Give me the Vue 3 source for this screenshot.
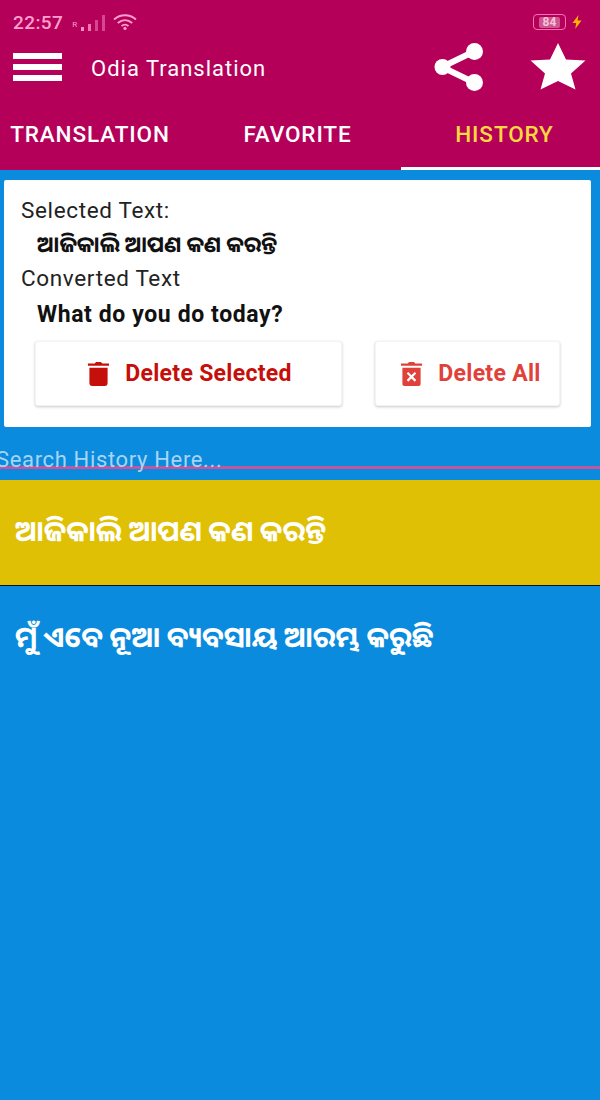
<template>
	<div class="screen">
		<header class="appbar">
			<div class="status">
				<span class="clock">22:57</span>
				<span class="roam">R</span>
				<span class="signal">
					<i v-for="(bar, idx) in signalBars" :key="idx" :style="{ height: bar.h + 'px', background: bar.c }"></i>
				</span>
				<svg class="wifi" viewBox="0 0 24 16" width="24" height="16">
					<path d="M1 5.5C7.5-.2 16.500-.2 23 5.500" />
					<path d="M4.800 9C9.200 5.300 14.800 5.300 19.200 9" />
					<path d="M8.500 12C10.700 10.300 13.300 10.300 15.500 12" />
					<circle cx="12" cy="14.400" r="1.600" />
				</svg>
				<span class="status-right">
					<span class="battery"><b>84</b></span>
					<svg class="bolt" viewBox="0 0 10 14" width="10" height="14">
						<path d="M6.500 0 0.500 8H4.200L3.200 14 9.500 5.600H5.600Z" />
					</svg>
				</span>
			</div>

			<div class="toolbar">
				<div class="menu"><i></i><i></i><i></i></div>
				<h1>Odia Translation</h1>
				<svg class="share" viewBox="0 0 50 48" width="50" height="48">
					<path d="M8 24 41 8M8 24 41 40" />
					<circle cx="8.500" cy="24" r="8" />
					<circle cx="40.500" cy="8.500" r="8.500" />
					<circle cx="40.500" cy="39.500" r="8.500" />
				</svg>
				<svg class="star" viewBox="0 0 56 48" width="56" height="48">
					<path d="M28 0 36 16.500 55.500 17.500 41 30.500 45.500 46.500 28 38 10.500 46.500 15 30.500 0.500 17.500 20 16.500Z" />
				</svg>
			</div>

			<nav class="tabs">
				<a v-for="tab in tabs" :key="tab" :class="{ active: tab === 'HISTORY' }">{{ tab }}</a>
			</nav>
		</header>

		<section class="card">
			<p class="label">Selected Text:</p>
			<p class="value odia">ଆଜିକାଲି ଆପଣ କଣ କରନ୍ତି</p>
			<p class="label">Converted Text</p>
			<p class="value english">What do you do today?</p>
			<div class="actions">
				<button class="btn selected">
					<svg viewBox="0 0 24 26" width="23" height="25">
						<path d="M8 2.500 9.500 1H14.500L16 2.500H23V5H1V2.500ZM2.500 7H21.500V23A3 3 0 0 1 18.500 26H5.500A3 3 0 0 1 2.500 23Z" />
					</svg>
					Delete Selected
				</button>
				<button class="btn all">
					<svg viewBox="0 0 24 26" width="23" height="25">
						<path fill-rule="evenodd" d="M8 2.500 9.500 1H14.500L16 2.500H23V5H1V2.500ZM2.500 7H21.500V24A2 2 0 0 1 19.500 26H4.500A2 2 0 0 1 2.500 24ZM8.600 11.500 7 13.100 10.400 16.500 7 19.900 8.600 21.500 12 18.100 15.400 21.500 17 19.900 13.600 16.500 17 13.100 15.400 11.500 12 14.900Z" />
					</svg>
					Delete All
				</button>
			</div>
		</section>

		<div class="search">
			<span>Search History Here...</span>
		</div>

		<ul class="history">
			<li v-for="(row, idx) in history" :key="idx" :class="{ picked: idx === 0 }">{{ row }}</li>
		</ul>
	</div>
</template>

<script setup>
const signalBars = [
	{ h: 4, c: "#ff8cc4" },
	{ h: 7, c: "#f078b0" },
	{ h: 11, c: "#d3488f" },
	{ h: 16, c: "#d3488f" },
];
const tabs = ["TRANSLATION", "FAVORITE", "HISTORY"];
const history = ["ଆଜିକାଲି ଆପଣ କଣ କରନ୍ତି", "ମୁଁ ଏବେ ନୂଆ ବ୍ୟବସାୟ ଆରମ୍ଭ କରୁଛି"];
</script>

<style>
html,
body {
	margin: 0;
	background: #0a8bdd;
}
</style>

<style scoped>
.screen {
	width: 600px;
	height: 1100px;
	overflow: hidden;
	background: #0a8bdd;
	font-family: Roboto, "Noto Sans", sans-serif;
}

.appbar {
	height: 170px;
	background: #b5005a;
}

.status {
	display: flex;
	align-items: center;
	height: 44px;
	padding: 0 18px 0 13px;
	box-sizing: border-box;
	color: #ff9fcf;
}
.clock {
	font-size: 19px;
	font-weight: 500;
	letter-spacing: 0.400px;
}
.roam {
	font-size: 8px;
	margin: 5px 4px 0 9px;
}
.signal {
	display: flex;
	align-items: flex-end;
	gap: 4px;
	height: 16px;
	margin-top: 2px;
}
.signal i {
	width: 3px;
}
.wifi {
	margin-left: 8px;
	fill: #ff9fcf;
}
.wifi path {
	fill: none;
	stroke: #ff9fcf;
	stroke-width: 1.800;
}
.status-right {
	display: flex;
	align-items: center;
	gap: 6px;
	margin-left: auto;
}
.battery {
	display: flex;
	align-items: center;
	justify-content: center;
	width: 33px;
	height: 16px;
	border: 1.500px solid #ff6fb4;
	border-radius: 4px;
	box-sizing: border-box;
}
.battery b {
	font-size: 12px;
	line-height: 11px;
	padding: 0 4px;
	color: #f4c2dc;
	background: #d0568f;
	border-radius: 2px;
}
.bolt {
	fill: #ffb300;
}

.toolbar {
	display: flex;
	align-items: center;
	height: 45px;
	padding: 0 14px 0 13px;
}
.menu {
	display: flex;
	flex-direction: column;
	gap: 5px;
	width: 49px;
}
.menu i {
	height: 6px;
	background: #fff;
}
h1 {
	flex: 1;
	margin: 3px 0 0 29px;
	font-size: 22px;
	font-weight: 400;
	letter-spacing: 1px;
	color: #fff;
}
.share {
	margin-right: 46px;
	fill: #fff;
	stroke: #fff;
}
.share path {
	stroke-width: 6px;
	fill: none;
}
.share circle {
	stroke: none;
}
.star {
	fill: #fff;
}

.tabs {
	display: grid;
	grid-template-columns: 180px 1fr 199px;
	height: 81px;
	box-sizing: border-box;
	padding-top: 16px;
}
.tabs a {
	font-size: 22.500px;
	font-weight: 500;
	letter-spacing: 0.900px;
	line-height: 58px;
	height: 65px;
	box-sizing: border-box;
	text-align: center;
	color: #fff;
}
.tabs a:nth-child(2) {
	padding-left: 14px;
}
.tabs a.active {
	padding-left: 8px;
	color: #ffd740;
	border-bottom: 3px solid #fff;
}

.card {
	margin: 10px 9px 0 4px;
	height: 247px;
	padding: 18px 18px 0;
	box-sizing: border-box;
	background: #fff;
	border-radius: 2px;
	color: #111;
}
.label {
	margin: 0;
	font-size: 22.500px;
	letter-spacing: 0.650px;
	line-height: 25px;
	margin-left: -1px;
	color: #222;
}
.value {
	margin: 8px 0 11px 15px;
	font-size: 23px;
	font-weight: 700;
	letter-spacing: 0.600px;
	line-height: 24px;
}
.odia {
	font-family: "Noto Sans Oriya", "Lohit Odia", Roboto, sans-serif;
	font-size: 22px;
	letter-spacing: 0;
}
.english {
	margin: 12px 0 0 15px;
}
.actions {
	display: flex;
	justify-content: space-between;
	margin: 14px 13px 0;
}
.btn {
	display: flex;
	align-items: center;
	justify-content: center;
	gap: 15px;
	height: 65px;
	border: 1px solid #f4f4f4;
	border-radius: 3px;
	background: #fff;
	box-shadow: 0 1px 3px rgba(0, 0, 0, 0.22);
	font-family: inherit;
	font-size: 23px;
	font-weight: 700;
	letter-spacing: 0.300px;
}
.btn svg {
	fill: currentColor;
}
.selected {
	width: 307px;
	padding-left: 8px;
	color: #c50f0a;
}
.all {
	width: 185px;
	padding-left: 12px;
	color: #e0413a;
}

.search {
	height: 21px;
	margin: 18px 0 11px;
	border-bottom: 3px solid #c2569f;
	color: #a6d5f3;
	font-size: 22px;
	letter-spacing: 0.650px;
	white-space: nowrap;
}
.search span {
	display: block;
	margin-left: -4px;
	line-height: 30px;
}

.history {
	list-style: none;
	margin: 0;
	padding: 0;
}
.history li {
	height: 106px;
	padding: 28px 15px 0;
	box-sizing: border-box;
	border-bottom: 1px solid #111;
	color: #fff;
	font-family: "Noto Sans Oriya", "Lohit Odia", Roboto, sans-serif;
	font-size: 28.500px;
	font-weight: 700;
	line-height: 44px;
}
.history li:last-child {
	border-bottom: 0;
}
.history li.picked {
	background: #dfc005;
}
</style>
